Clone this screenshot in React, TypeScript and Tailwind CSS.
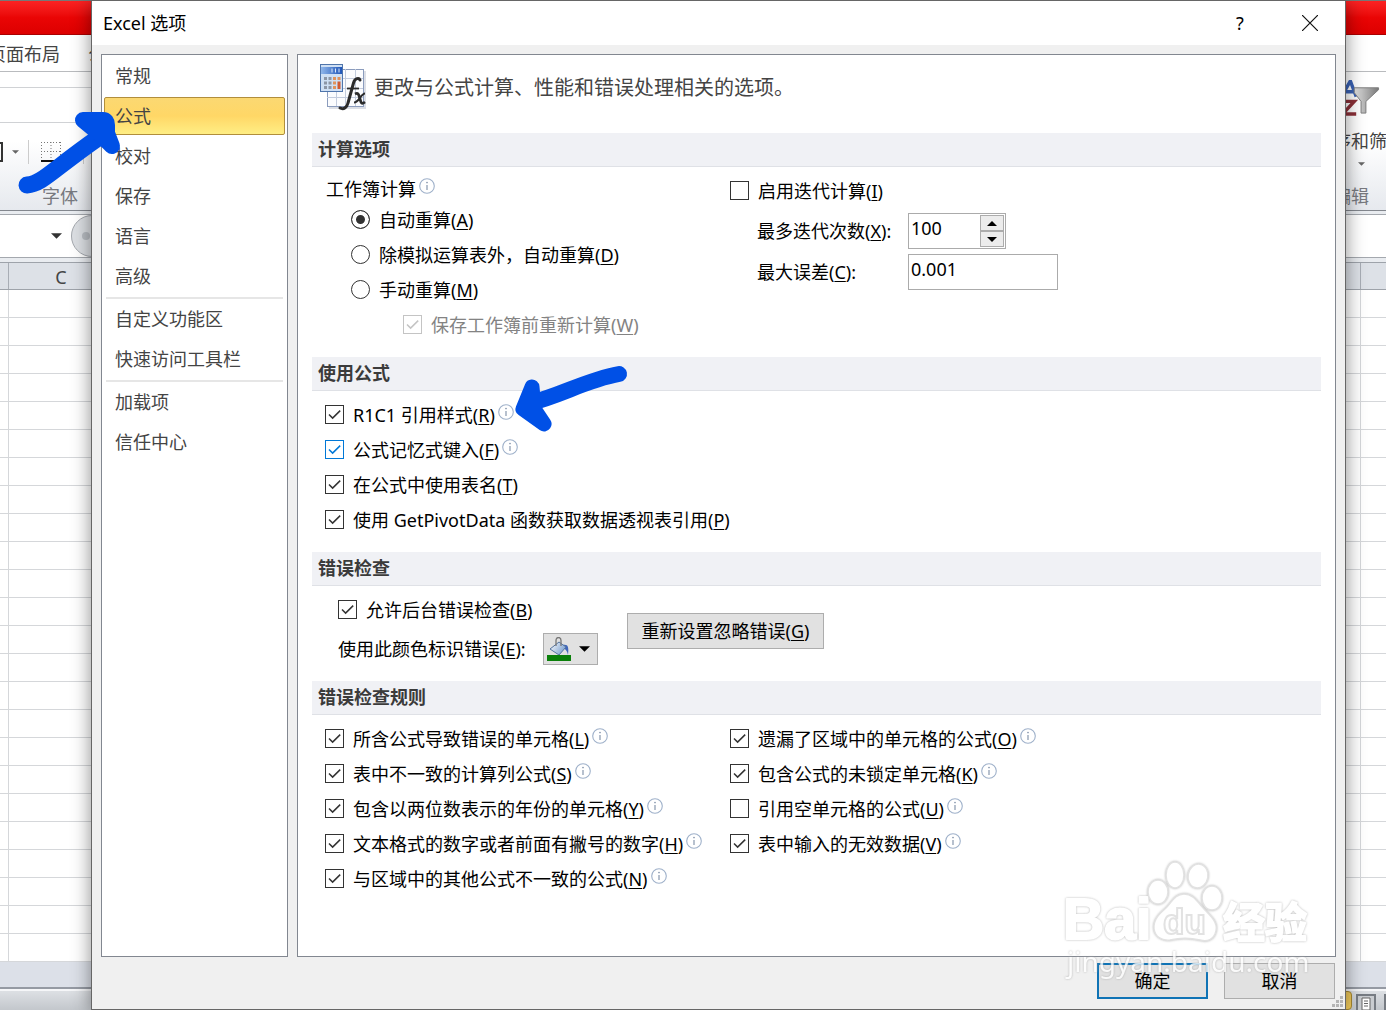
import type { ReactNode } from "react";

const navGroups = [
  ["常规", "公式", "校对", "保存", "语言", "高级"],
  ["自定义功能区", "快速访问工具栏"],
  ["加载项", "信任中心"],
];

const formulaOptions = [
  { text: "R1C1 引用样式", hotkey: "R", info: true },
  { text: "公式记忆式键入", hotkey: "F", info: true, hot: true },
  { text: "在公式中使用表名", hotkey: "T" },
  { text: "使用 GetPivotData 函数获取数据透视表引用", hotkey: "P" },
];

const rulesLeft = [
  { text: "所含公式导致错误的单元格", hotkey: "L" },
  { text: "表中不一致的计算列公式", hotkey: "S" },
  { text: "包含以两位数表示的年份的单元格", hotkey: "Y" },
  { text: "文本格式的数字或者前面有撇号的数字", hotkey: "H" },
  { text: "与区域中的其他公式不一致的公式", hotkey: "N" },
];

const rulesRight = [
  { text: "遗漏了区域中的单元格的公式", hotkey: "O", on: true },
  { text: "包含公式的未锁定单元格", hotkey: "K", on: true },
  { text: "引用空单元格的公式", hotkey: "U", on: false },
  { text: "表中输入的无效数据", hotkey: "V", on: true },
];

function InfoIcon() {
  return (
    <svg className="mb-[5px] ml-[3px] h-4 w-4 shrink-0" viewBox="0 0 16 16" fill="none">
      <circle cx="8" cy="8" r="7.3" stroke="#9fb1ca" strokeWidth="1.1" />
      <path d="M8 7v5" stroke="#7c8da6" strokeWidth="1.1" />
      <circle cx="8" cy="4.6" r="0.8" fill="#7c8da6" />
    </svg>
  );
}

function Hotkey({ text, hotkey, end = "" }: { text: string; hotkey: string; end?: string }) {
  return (
    <span className="whitespace-nowrap">
      {text}(<u className="underline-offset-2">{hotkey}</u>){end}
    </span>
  );
}

type CheckProps = {
  text: string;
  hotkey: string;
  on?: boolean;
  info?: boolean;
  hot?: boolean;
  disabled?: boolean;
};

function Check({ text, hotkey, on = true, info, hot, disabled }: CheckProps) {
  const color = disabled ? "text-[#c4c4c4]" : hot ? "text-[#0078d7]" : "text-[#333]";
  return (
    <div className="flex h-[35px] items-center">
      <label className={disabled ? "flex items-center gap-[9px] text-[#838383]" : "flex items-center gap-[9px]"}>
        <span className={`grid h-[19px] w-[19px] shrink-0 ${color}`}>
          <input
            type="checkbox"
            defaultChecked={on}
            disabled={disabled}
            className="peer col-start-1 row-start-1 h-[19px] w-[19px] appearance-none border border-current bg-white"
          />
          <svg
            className="pointer-events-none invisible col-start-1 row-start-1 h-[19px] w-[19px] peer-checked:visible"
            viewBox="0 0 19 19"
            fill="none"
          >
            <path d="M4 9.5l3.6 3.6L15.2 5.6" stroke="currentColor" strokeWidth="1.5" />
          </svg>
        </span>
        <Hotkey text={text} hotkey={hotkey} />
      </label>
      {info && <InfoIcon />}
    </div>
  );
}

function Radio({ text, hotkey, on }: { text: string; hotkey: string; on?: boolean }) {
  return (
    <label className="flex h-[35px] items-center gap-[9px]">
      <input
        type="radio"
        name="calc"
        defaultChecked={on}
        className="h-[19px] w-[19px] appearance-none rounded-full border border-[#333] bg-white checked:bg-[#333] checked:shadow-[inset_0_0_0_4px_white]"
      />
      <Hotkey text={text} hotkey={hotkey} />
    </label>
  );
}

function Section({ title, children }: { title: string; children: ReactNode }) {
  return (
    <section>
      <h2 className="h-[34px] border-b border-[#dfe1e6] bg-[#f0f1f5] px-1.5 leading-8 font-bold text-[#3b3b3b]">
        {title}
      </h2>
      {children}
    </section>
  );
}

function FormulaIcon() {
  return (
    <svg className="h-12 w-12 shrink-0" viewBox="0 0 48 48">
      <defs>
        <linearGradient id="calcBlue" x1="0" y1="0" x2="1" y2="0">
          <stop offset="0" stopColor="#8fb6ea" />
          <stop offset="1" stopColor="#1f55b8" />
        </linearGradient>
      </defs>
      <rect x="9" y="7" width="37" height="38" fill="#dcdfe6" />
      <rect x="7.5" y="5.5" width="36" height="37" fill="#fbfcfe" stroke="#8b9cbd" />
      <path d="M25.5 5v37M35.5 5v37M16.5 22v20M7 14.5h36M7 24.5h36M7 33.5h36" stroke="#c3ccdd" />
      <rect x="0.5" y="0.5" width="22" height="27" fill="#cfe0f4" stroke="#4f75ab" />
      <rect x="1" y="3" width="21" height="7" fill="url(#calcBlue)" />
      <path d="M12 4.5v4M15.5 4.5v4M19 4.5v4" stroke="#dbe8fa" />
      <path d="M5.5 13v12M10 13v12" stroke="#8c96a6" strokeWidth="3" strokeDasharray="3 1.5" />
      <path d="M14.5 13v12M19 13v3" stroke="#e0935c" strokeWidth="3" strokeDasharray="3 1.5" />
      <path d="M19 17.5v7.5" stroke="#cf5b33" strokeWidth="3" />
      <path
        d="M40 16c-1-2.5-5-2-6.500 3L28 39c-1 4-4 7-8 5"
        fill="none"
        stroke="#2b2b2b"
        strokeWidth="3"
        strokeLinecap="round"
      />
      <path d="M27 24.500h12" stroke="#2b2b2b" strokeWidth="1.8" />
      <path d="M35 30c4-2 4 2 5 5s1 6 5 3" fill="none" stroke="#2b2b2b" strokeWidth="2.8" />
      <path d="M45 29.500c-4 0-6 9-11 9" fill="none" stroke="#2b2b2b" strokeWidth="2" />
    </svg>
  );
}

function BucketIcon() {
  return (
    <svg className="h-6 w-6" viewBox="0 0 24 24">
      <defs>
        <linearGradient id="bucket" x1="0" y1="0" x2="1" y2="0.5">
          <stop offset="0" stopColor="#fff" />
          <stop offset="1" stopColor="#7fa3d1" />
        </linearGradient>
      </defs>
      <path d="M16 8c5-1 6 2 5 10-1-4-2-6-5-7z" fill="#3f66bb" />
      <path d="M3 12l9-7 7 5-7 8z" fill="url(#bucket)" stroke="#55749f" />
      <path d="M9 9V3.500c0-4 5-4 5 0V9" fill="none" stroke="#777" strokeWidth="1.3" />
      <rect x="0" y="18" width="24" height="6" fill="#0a800a" />
    </svg>
  );
}

function Down({ className }: { className: string }) {
  return (
    <svg className={className} viewBox="0 0 10 5" fill="currentColor">
      <path d="M0 0h10L5 5z" />
    </svg>
  );
}

/* Worksheet window that shows at both sides of the dialog */
function Workbook() {
  const rows = Array.from({ length: 24 });
  return (
    <div className="col-start-1 row-start-1 flex min-w-0 flex-col overflow-hidden bg-white">
      <div className="h-[35px] shrink-0 border-t border-b border-t-[#777] border-b-[#a00] bg-linear-to-b from-[#fb2222] via-[#ea0505] to-[#dd0000]" />
      <div className="flex h-[37px] shrink-0 items-center gap-7 border-b border-[#b9bbbe] pt-0.5 text-[#444]">
        <span className="-ml-3 whitespace-nowrap">页面布局</span>
        <span>公式</span>
      </div>
      <div className="flex h-[139px] shrink-0 justify-between border-b border-[#83878e] bg-linear-to-b from-white from-50% to-[#e6e9ee]">
        <div className="flex w-[92px] flex-col">
          <div className="mt-[15px] h-9 shrink-0 border-y border-[#d0d2d5]" />
          <div className="flex h-[58px] items-center">
            <span className="h-5 w-[3px] border-y-2 border-r-2 border-[#333]" />
            <Down className="ml-[9px] h-1 w-[7px] text-[#666]" />
            <span className="ml-[9px] h-6 w-px bg-[#ccc]" />
            <svg className="ml-3 h-5 w-5 shrink-0" viewBox="0 0 20 20" fill="none">
              <path d="M0 .5h20M0 9.500h20M.5 0v18M10 0v18M19.500 0v18" stroke="#777" strokeDasharray="1 2" />
              <path d="M0 19h20" stroke="#111" strokeWidth="2" />
            </svg>
            <span className="ml-[22px] h-6 w-px bg-[#ccc]" />
          </div>
          <span className="pt-px pl-[42px] leading-7 text-[#77797f]">字体</span>
        </div>
        <div className="flex w-[41px] flex-col overflow-hidden">
          <svg className="mt-2 h-9 w-9 shrink-0" viewBox="0 0 36 37">
            <defs>
              <linearGradient id="funnel" x1="0" y1="0" x2="1" y2="0">
                <stop offset="0" stopColor="#e3e3e3" />
                <stop offset="1" stopColor="#777" />
              </linearGradient>
            </defs>
            <path d="M-4 17L5 1l6 16M0 12h9" fill="none" stroke="#3a62b5" strokeWidth="3.5" />
            <path d="M-3 22h12L-3 35h14" fill="none" stroke="#8c3038" strokeWidth="3.5" />
            <path d="M9 8h25v2L21 22v12h-5V22L9 13z" fill="url(#funnel)" stroke="#7d7d7d" />
          </svg>
          <span className="mt-[11px] -ml-3 leading-7 whitespace-nowrap text-[#444]">序和筛选</span>
          <Down className="mt-[7px] ml-[13px] h-1 w-[7px] shrink-0 text-[#666]" />
          <span className="mt-4 -ml-3 leading-7 whitespace-nowrap text-[#77797f]">编辑</span>
        </div>
      </div>
      <div className="flex h-[51px] shrink-0 bg-[#e9ecf0] pt-[3px] pb-1">
        <div className="flex flex-1 items-center border-y border-[#a4a8ae] bg-white">
          <Down className="ml-[51px] h-1.5 w-[11px] text-[#333]" />
          <span className="ml-[9px] flex h-[42px] w-[42px] shrink-0 items-center rounded-full border border-[#a4a8ae] bg-[#dcdfe3] pl-2.5">
            <i className="h-2 w-2 rounded-full bg-[#b9bdc3]" />
          </span>
        </div>
      </div>
      <div className="flex h-7 shrink-0 justify-between border-t border-b border-[#9ea3aa] bg-[#dde1e7] text-[#444]">
        <div className="w-[9px] border-r border-[#a8adb5]" />
        <div className="w-[104px] text-center leading-7">C</div>
        <div className="flex-1" />
        <div className="w-[26px] border-l border-[#a8adb5]" />
      </div>
      {rows.map((_, i) => (
        <div key={i} className="flex h-7 shrink-0 justify-between border-b border-[#d5d7da]">
          <div className="w-[9px] border-r border-[#d5d7da]" />
          <div className="w-[26px] border-l border-[#d5d7da]" />
        </div>
      ))}
      <div className="h-[27px] shrink-0 border-b-2 border-[#959aa3] bg-[#dce0e8]" />
      <div className="flex min-h-[21px] flex-1 items-end justify-end border-t-2 border-[#f5f6f8] bg-linear-to-b from-[#dde0e4] to-[#c3c7cc]">
        <span className="h-[19px] w-4 rounded-sm border border-[#a98a32] bg-[#f3cc5c]" />
        <svg className="mr-2 ml-1 h-4 w-5" viewBox="0 0 20 16">
          <rect x="1" y="1" width="18" height="16" fill="#c9ccd0" stroke="#777c83" strokeWidth="2" />
          <path d="M6 4h8v12H6z" fill="#fff" stroke="#666" />
          <path d="M8 7h4M8 9.500h4M8 12h4" stroke="#666" />
        </svg>
        <span className="h-4 w-0.5 bg-[#777c83]" />
      </div>
    </div>
  );
}

function Dialog() {
  return (
    <div
      role="dialog"
      aria-label="Excel 选项"
      className="z-10 col-start-1 row-start-1 mr-10 ml-[91px] flex min-w-0 flex-col border border-[#666] bg-[#f0f0f0] shadow-[0_2px_18px_rgba(0,0,0,0.45)]"
    >
      <header className="flex h-11 shrink-0 items-center bg-white pl-[11px]">
        <h1 className="flex-1">Excel 选项</h1>
        <button aria-label="帮助" className="h-11 w-[70px] text-lg">
          ?
        </button>
        <button aria-label="关闭" className="flex h-11 w-[70px] items-center justify-center">
          <svg className="h-4 w-4" viewBox="0 0 16 16" stroke="#111" strokeWidth="1.2">
            <path d="M0 0l16 16M16 0L0 16" />
          </svg>
        </button>
      </header>

      <div className="flex flex-1 gap-[9px] px-[9px] pt-[9px]">
        <nav className="w-[187px] shrink-0 border border-[#828790] bg-white px-0.5 pt-px text-[#444]">
          {navGroups.map((group, i) => (
            <div key={i}>
              {i > 0 && <hr className="mx-0.5 mt-px border-t-2 border-[#e6e6e6]" />}
              {group.map((name) => (
                <button
                  key={name}
                  className={
                    name === "公式"
                      ? "my-px block h-[38px] w-full rounded-xs border border-[#b18e3c] bg-linear-to-b from-[#fbd872] via-[#ffd766] to-[#ffee84] px-2.5 text-left"
                      : "block h-10 w-full px-[11px] text-left"
                  }
                >
                  {name}
                </button>
              ))}
            </div>
          ))}
        </nav>

        <main className="min-w-0 flex-1 border border-[#828790] bg-white px-[14px]">
          <div className="mb-3 flex h-[66px] items-center gap-1.5 pl-2 text-xl text-[#444]">
            <FormulaIcon />
            <p>更改与公式计算、性能和错误处理相关的选项。</p>
          </div>

          <Section title="计算选项">
            <div className="grid grid-cols-[418px_1fr] pb-[15px]">
              <div className="pt-2 pl-[14px]">
                <div className="flex h-[27px] items-center">
                  工作簿计算
                  <InfoIcon />
                </div>
                <div className="pl-[25px]">
                  <Radio text="自动重算" hotkey="A" on />
                  <Radio text="除模拟运算表外，自动重算" hotkey="D" />
                  <Radio text="手动重算" hotkey="M" />
                  <div className="pl-[52px]">
                    <Check text="保存工作簿前重新计算" hotkey="W" disabled />
                  </div>
                </div>
              </div>
              <div className="pt-1.5">
                <Check text="启用迭代计算" hotkey="I" on={false} />
                <div className="mt-[5px] grid grid-cols-[151px_1fr] items-center gap-y-[5px] pl-[27px]">
                  <label htmlFor="iterations">
                    <Hotkey text="最多迭代次数" hotkey="X" end=":" />
                  </label>
                  <div className="flex h-9 w-[98px] border border-[#ababab] p-px">
                    <input id="iterations" defaultValue="100" className="w-[70px] px-px pb-1.5 outline-none" />
                    <div className="flex flex-1 flex-col">
                      <button
                        aria-label="增加"
                        className="flex flex-1 items-center justify-center border border-[#acacac] bg-[#ececec]"
                      >
                        <Down className="h-[5px] w-2.5 rotate-180" />
                      </button>
                      <button
                        aria-label="减少"
                        className="flex flex-1 items-center justify-center border border-[#acacac] bg-[#ececec]"
                      >
                        <Down className="h-[5px] w-2.5" />
                      </button>
                    </div>
                  </div>
                  <label htmlFor="maxchange">
                    <Hotkey text="最大误差" hotkey="C" end=":" />
                  </label>
                  <input
                    id="maxchange"
                    defaultValue="0.001"
                    className="h-9 w-[150px] border border-[#ababab] px-0.5 pb-1.5 outline-none"
                  />
                </div>
              </div>
            </div>
          </Section>

          <Section title="使用公式">
            <div className="pt-1.5 pb-[15px] pl-[13px]">
              {formulaOptions.map((o) => (
                <Check key={o.hotkey} {...o} />
              ))}
            </div>
          </Section>

          <Section title="错误检查">
            <div className="flex pt-1.5 pb-4 pl-[26px]">
              <div className="w-[289px]">
                <Check text="允许后台错误检查" hotkey="B" />
                <div className="mt-1.5 flex h-8 items-center">
                  <span className="w-[205px]">
                    <Hotkey text="使用此颜色标识错误" hotkey="E" end=":" />
                  </span>
                  <button
                    aria-label="错误颜色"
                    className="flex h-8 w-[55px] items-center gap-2 border border-[#adadad] bg-[#e1e1e1] pl-[3px]"
                  >
                    <BucketIcon />
                    <Down className="h-1.5 w-[11px]" />
                  </button>
                </div>
              </div>
              <button className="mt-[21px] h-9 w-[197px] border border-[#adadad] bg-[#e1e1e1]">
                <Hotkey text="重新设置忽略错误" hotkey="G" />
              </button>
            </div>
          </Section>

          <Section title="错误检查规则">
            <div className="grid grid-cols-[405px_1fr] pt-1.5 pl-[13px]">
              <div>
                {rulesLeft.map((r) => (
                  <Check key={r.hotkey} {...r} info />
                ))}
              </div>
              <div>
                {rulesRight.map((r) => (
                  <Check key={r.hotkey} {...r} info />
                ))}
              </div>
            </div>
          </Section>
        </main>
      </div>

      <footer className="flex h-[52px] shrink-0 items-start justify-end gap-4 pt-1.5 pl-[9px]">
        <button className="h-9 w-[111px] border-2 border-[#0f73b5] bg-[#e1e1e1]">确定</button>
        <div className="flex">
          <button className="h-9 w-[111px] border border-[#adadad] bg-[#e1e1e1]">取消</button>
          <svg className="mt-8 -ml-1 h-3.5 w-3.5" viewBox="0 0 14 14" fill="#b5b5b5">
            <path d="M9 1h3v3H9zM5 5h3v3H5zM9 5h3v3H9zM1 9h3v3H1zM5 9h3v3H5zM9 9h3v3H9z" />
          </svg>
        </div>
      </footer>
    </div>
  );
}

function Logo() {
  return (
    <div className="pointer-events-none absolute right-[70px] bottom-[22px] z-20 opacity-80">
      <svg
        className="h-[130px] w-[256px] drop-shadow-[0_0_1px_#a8a8a8]"
        viewBox="0 0 256 130"
        fill="#fff"
        fontFamily='"Liberation Sans", "Noto Sans CJK SC", sans-serif'
        fontWeight="700"
      >
        <g stroke="#fff" strokeWidth="2" strokeLinejoin="round">
          <text x="3" y="81" fontSize="57">Bai</text>
          <text x="163" y="80" fontSize="42">经验</text>
        </g>
        <g stroke="#dcdcdc" strokeWidth="1.5">
          <ellipse cx="98" cy="34" rx="10" ry="12" />
          <ellipse cx="115" cy="17" rx="9" ry="13" />
          <ellipse cx="138" cy="18" rx="10" ry="12" transform="rotate(10 138 18)" />
          <ellipse cx="152" cy="40" rx="10" ry="12" />
          <path d="M124 36c10 0 14 9 20 15 8 8 14 14 12 22-2 9-9 11-16 9-9-2-21-2-30 0-9 1-15-4-16-11-1-9 5-15 12-21 6-6 9-14 18-14z" />
          <text x="103" y="76" fontSize="35" strokeWidth="2">du</text>
        </g>
        <text x="7" y="114" fontSize="28" fontFamily='"Noto Sans", sans-serif' fontWeight="400">
          jingyan.baidu.com
        </text>
      </svg>
    </div>
  );
}

/* Hand-drawn marks over the window */
function Arrows() {
  return (
    <>
      <svg
        className="pointer-events-none absolute top-[105px] left-[15px] z-20 h-[95px] w-[110px]"
        viewBox="15 105 110 95"
        fill="#0050e6"
        stroke="#0050e6"
        strokeLinecap="round"
        strokeLinejoin="round"
      >
        <path d="M27 185C42 184 52 170 98 138" fill="none" strokeWidth="17" />
        <path d="M83 120h20q4 0 4 5l0 8 5 13-12-12z" strokeWidth="16" />
      </svg>
      <svg
        className="pointer-events-none absolute top-[360px] left-[505px] z-20 h-[80px] w-[130px]"
        viewBox="505 360 130 80"
        fill="#0050e6"
        stroke="#0050e6"
        strokeLinecap="round"
        strokeLinejoin="round"
      >
        <path d="M619 374C586 380 560 396 530 403" fill="none" strokeWidth="16" />
        <path d="M532 387L523 409l21 15-10-15z" strokeWidth="15" />
      </svg>
    </>
  );
}

export default function App() {
  return (
    <div className="relative grid min-h-screen grid-cols-1 overflow-hidden font-['Noto_Sans','Noto_Sans_CJK_SC',sans-serif] text-lg leading-7 text-black">
      <Workbook />
      <Dialog />
      <Logo />
      <Arrows />
    </div>
  );
}
